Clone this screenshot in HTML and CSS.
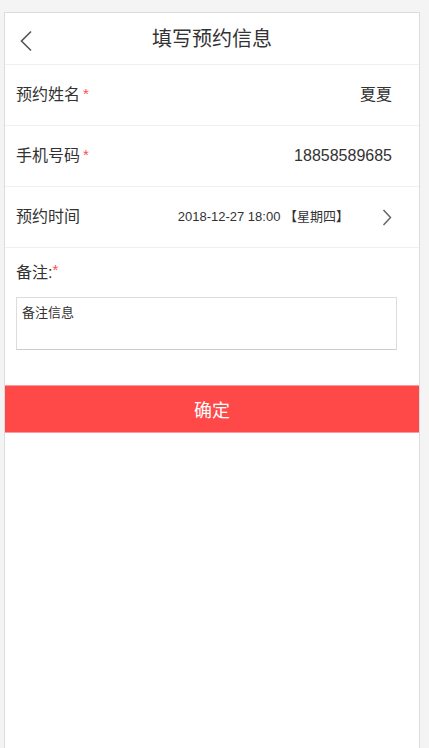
FILE: index.html
```html
<!DOCTYPE html>
<html lang="zh-CN">
<head>
<meta charset="utf-8">
<title>填写预约信息</title>
<link rel="stylesheet" href="styles.css">
</head>
<body>
<div class="page">
  <header class="topbar">
    <a class="back" href="#" aria-label="返回">
      <svg width="14" height="22" viewBox="0 0 14 22"><polyline points="12,1.5 2.5,11 12,20.5" fill="none" stroke="#555" stroke-width="1.6"/></svg>
    </a>
    <h1 class="title">填写预约信息</h1>
  </header>

  <div class="row">
    <span class="label">预约姓名<i class="req">*</i></span>
    <span class="value">夏夏</span>
  </div>
  <div class="row">
    <span class="label">手机号码<i class="req">*</i></span>
    <span class="value">18858589685</span>
  </div>
  <div class="row">
    <span class="label">预约时间</span>
    <span class="date">2018-12-27 18:00 【星期四】</span>
    <svg class="chev" width="10" height="17" viewBox="0 0 10 17"><polyline points="1.5,1 8.5,8.5 1.5,16" fill="none" stroke="#666" stroke-width="1.5"/></svg>
  </div>

  <div class="remark">
    <div class="label">备注:<i class="req">*</i></div>
    <textarea class="memo" placeholder="备注信息"></textarea>
  </div>

  <button class="submit" type="button">确定</button>
</div>
</body>
</html>
```

FILE: styles.css
```css
html, body {
  margin: 0;
  padding: 0;
}
body {
  background: #f4f4f4;
  font-family: "Liberation Sans", "Noto Sans CJK SC", sans-serif;
  color: #333;
}
.page {
  margin: 12px 0 0 4px;
  width: 416px;
  box-sizing: border-box;
  min-height: calc(100vh - 12px);
  background: #fff;
  border: 1px solid #dcdcdc;
  border-bottom: none;
}
.topbar {
  position: relative;
  height: 51px;
  border-bottom: 1px solid #f0f0f0;
  display: flex;
  align-items: center;
  justify-content: center;
}
.back {
  position: absolute;
  left: 14px;
  top: 17px;
  display: block;
  line-height: 0;
}
.title {
  margin: 0;
  font-size: 20px;
  font-weight: normal;
  line-height: 28px;
  color: #333;
}
.row {
  height: 60px;
  border-bottom: 1px solid #f0f0f0;
  display: flex;
  align-items: center;
  padding: 0 27px 0 11px;
}
.label {
  font-size: 16px;
  line-height: 22px;
  color: #333;
}
.req {
  font-style: normal;
  color: #ff4d4d;
  font-size: 15px;
  margin-left: 3px;
  position: relative;
  top: -1px;
}
.value {
  margin-left: auto;
  font-size: 16px;
  line-height: 22px;
  color: #333;
}
.date {
  margin-left: auto;
  font-size: 13px;
  line-height: 20px;
  color: #333;
  margin-right: 33px;
}
.chev {
  display: block;
}
.remark {
  padding: 14px 0 35px 11px;
}
.remark .req {
  margin-left: 0;
  top: -3px;
}
.memo {
  display: block;
  margin-top: 13px;
  box-sizing: border-box;
  width: 381px;
  height: 53px;
  border: 1px solid #dddddd;
  border-bottom-color: #cccccc;
  padding: 6px 5px;
  font-family: "Liberation Sans", "Noto Sans CJK SC", sans-serif;
  font-size: 13px;
  line-height: 18px;
  color: #333;
  resize: none;
  outline: none;
}
.memo::placeholder {
  color: #333;
}
.submit {
  display: block;
  width: 100%;
  height: 48px;
  margin: 0;
  border: none;
  border-top: 1px solid #ff9a9a;
  border-bottom: 1px solid #ff9a9a;
  background: #ff4848;
  color: #fff;
  font-family: "Liberation Sans", "Noto Sans CJK SC", sans-serif;
  font-size: 18px;
  cursor: pointer;
}
```
